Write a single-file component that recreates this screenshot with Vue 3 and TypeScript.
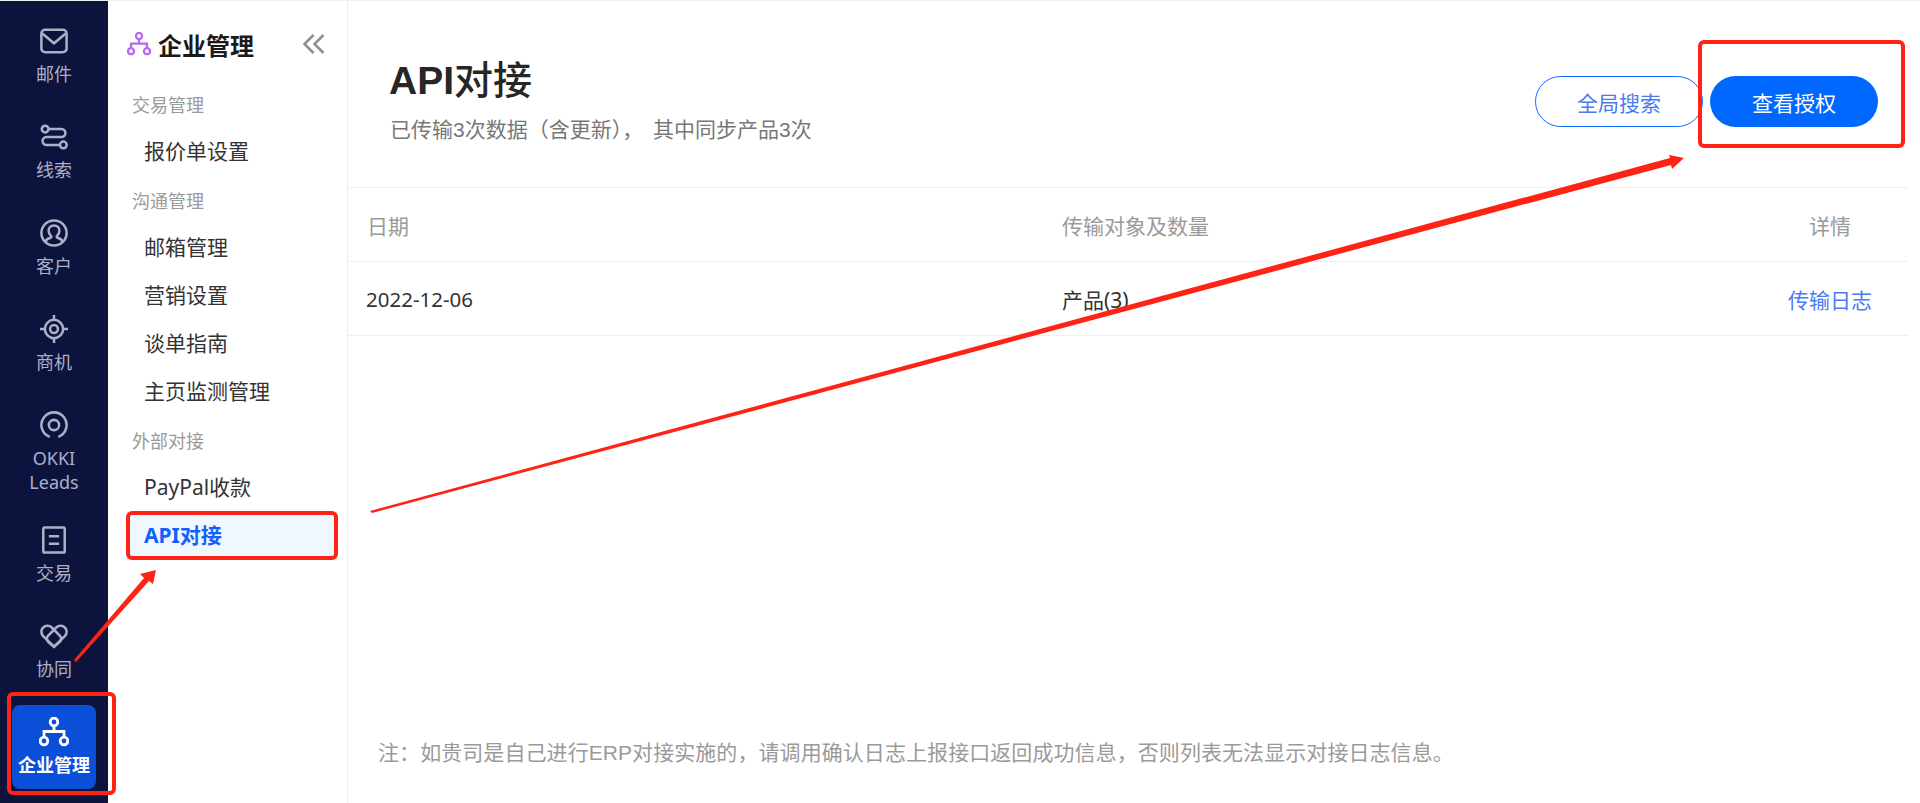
<script setup lang="ts">
type RailItem = { key: string; label: string[]; tall?: boolean }

const railItems: RailItem[] = [
  { key: 'mail', label: ['邮件'] },
  { key: 'lead', label: ['线索'] },
  { key: 'customer', label: ['客户'] },
  { key: 'chance', label: ['商机'] },
  { key: 'okki', label: ['OKKI', 'Leads'], tall: true },
  { key: 'trade', label: ['交易'] },
  { key: 'team', label: ['协同'] },
]

const menu = [
  { title: '交易管理', items: ['报价单设置'] },
  { title: '沟通管理', items: ['邮箱管理', '营销设置', '谈单指南', '主页监测管理'] },
  { title: '外部对接', items: ['PayPal收款', 'API对接'] },
]
</script>

<template>
  <div class="page">
    <nav class="rail">
      <a v-for="item in railItems" :key="item.key" class="rail-item" :class="{ tall: item.tall }">
        <svg class="rail-icon" viewBox="0 0 30 30" fill="none" stroke="currentColor" stroke-width="2.7">
          <template v-if="item.key === 'mail'">
            <rect x="1.5" y="3" width="27" height="24" rx="4" />
            <path d="M2.5 7 15 17.500 27.500 7" />
          </template>
          <template v-else-if="item.key === 'lead'">
            <circle cx="5.500" cy="6.500" r="3.600" />
            <circle cx="25" cy="23.500" r="3.600" />
            <path d="M9 6.500h14a4 4 0 0 1 0 8.500H7a4.200 4.200 0 0 0 0 8.500h14.500" />
          </template>
          <template v-else-if="item.key === 'customer'">
            <circle cx="15" cy="15" r="13.500" />
            <path d="M6.500 25v-1.500c0-2 2.500-2.600 5-3.500.8-.4.8-1.500 0-2.300-1.500-1.500-2.300-3-2.300-5 0-3.500 2.400-5.700 5.800-5.700s5.800 2.200 5.800 5.700c0 2-.8 3.500-2.300 5-.8.8-.8 1.900 0 2.300 2.500.9 5 1.500 5 3.500V25" />
          </template>
          <template v-else-if="item.key === 'chance'">
            <circle cx="15" cy="15" r="9.800" />
            <circle cx="15" cy="15" r="4.200" />
            <path d="M15 0v5M15 25v5M0 15h5M25 15h5" />
          </template>
          <template v-else-if="item.key === 'okki'">
            <path d="M10.500 27.700A13.500 13.500 0 1 1 19.500 27.700" />
            <circle cx="15" cy="15" r="5.500" />
          </template>
          <template v-else-if="item.key === 'trade'">
            <rect x="3.500" y="1.500" width="23" height="27" rx="1.500" />
            <path d="M9.500 11h11M9.500 19h11" />
          </template>
          <template v-else>
            <path d="M15 26.500 3.400 15.100A6.500 6.500 0 0 1 12.600 5.900L21.200 14.500a4.800 4.800 0 0 1 0 6.800L15 26.500Z" />
            <path d="M15 26.500 26.600 15.100A6.500 6.500 0 0 0 17.400 5.900L8.800 14.500a4.800 4.800 0 0 0 0 6.800L15 26.500Z" />
          </template>
        </svg>
        <span v-for="line in item.label" :key="line" class="rail-label">{{ line }}</span>
      </a>
      <a class="rail-item active">
        <svg class="rail-icon" viewBox="0 0 30 30" fill="none" stroke="currentColor" stroke-width="2.800">
          <circle cx="15" cy="5" r="3.800" />
          <circle cx="5" cy="24" r="3.800" />
          <circle cx="25" cy="24" r="3.800" />
          <path d="M15 9v5.500M5 20v-5.500h20V20" />
        </svg>
        <span class="rail-label">企业管理</span>
      </a>
    </nav>

    <aside class="side">
      <div class="side-hd">
        <svg class="side-logo" viewBox="0 0 30 30" fill="none" stroke="#b667f5" stroke-width="2.800">
          <circle cx="15" cy="5" r="3.800" />
          <circle cx="5" cy="24" r="3.800" />
          <circle cx="25" cy="24" r="3.800" />
          <path d="M15 9v5.500M5 20v-5.500h20V20" />
        </svg>
        <span class="side-title">企业管理</span>
        <svg class="side-fold" viewBox="0 0 22 20" fill="none" stroke="#8f8f8f" stroke-width="2.500">
          <path d="M10.500 1 1.500 10l9 9M20.500 1l-9 9 9 9" />
        </svg>
      </div>
      <div v-for="group in menu" :key="group.title" class="side-group">
        <div class="group-title">{{ group.title }}</div>
        <a
          v-for="entry in group.items"
          :key="entry"
          class="side-link"
          :class="{ current: entry === 'API对接' }"
        >{{ entry }}</a>
      </div>
    </aside>

    <main class="main">
      <header class="main-hd">
        <div>
          <h1 class="main-title"><b>API</b>对接</h1>
          <p class="main-sub">已传输3次数据（含更新）， 其中同步产品3次</p>
        </div>
        <div class="actions">
          <button class="btn ghost">全局搜索</button>
          <button class="btn primary">查看授权</button>
        </div>
      </header>
      <div class="row head">
        <span class="col-date head-date">日期</span>
        <span class="col-target">传输对象及数量</span>
        <span class="col-detail">详情</span>
      </div>
      <div class="row">
        <span class="col-date day">2022-12-06</span>
        <span class="col-target">产品(3)</span>
        <a class="col-detail link">传输日志</a>
      </div>
      <p class="note">注：如贵司是自己进行ERP对接实施的，请调用确认日志上报接口返回成功信息，否则列表无法显示对接日志信息。</p>
    </main>

    <!-- annotations drawn on top of the screenshot -->
    <svg class="marks" viewBox="0 0 1920 803">
      <g fill="none" stroke="#ff2316" stroke-width="4">
        <rect x="9" y="694" width="105" height="99" rx="4" />
        <rect x="128" y="513" width="208" height="45" rx="4" />
        <rect x="1700" y="42" width="203" height="104" rx="4" />
      </g>
      <g fill="#ff2316">
        <path d="M74 660 144 578 140 574 156 570 153 584 149 581 76 662Z" />
        <path d="M370 511 1670 158 1669 155 1684 158 1672 169 1671 165 372 513Z" />
      </g>
    </svg>
  </div>
</template>

<style>
html, body { margin: 0; background: #fff; }
</style>

<style scoped>
.page {
  position: relative;
  display: flex;
  height: 803px;
  width: 1920px;
  overflow: hidden;
  border-top: 1px solid #eee;
  box-sizing: border-box;
  font-family: "Noto Sans", "Noto Sans CJK SC", sans-serif;
  background: #fff;
}
.rail {
  width: 108px;
  flex-shrink: 0;
  background: #0c143e;
  color: #acb0c6;
  display: flex;
  flex-direction: column;
  align-items: center;
  padding-top: 26px;
  box-sizing: border-box;
}
.rail-item {
  width: 84px;
  height: 96px;
  flex-shrink: 0;
  display: flex;
  flex-direction: column;
  align-items: center;
}
.rail-item.tall { height: 115px; }
.rail-icon { width: 28px; height: 28px; flex-shrink: 0; }
.rail-label { font-size: 18px; line-height: 24px; margin-top: 7px; }
.rail-label + .rail-label { margin-top: 0; }
.rail-item.active {
  height: 84px;
  margin-top: -13px;
  padding-top: 12px;
  box-sizing: border-box;
  background: #0b4fd8;
  border-radius: 8px;
  color: #fff;
}
.rail-item.active .rail-icon { width: 30px; height: 30px; }
.rail-item.active .rail-label { font-weight: 700; margin-top: 7px; line-height: 22px; }
.side {
  width: 240px;
  flex-shrink: 0;
  border-right: 1px solid #eee;
  box-sizing: border-box;
  padding: 0 9px 0 19px;
}
.side-hd { display: flex; align-items: center; height: 79px; padding-top: 7px; box-sizing: border-box; }
.side-logo { width: 24px; height: 24px; margin-right: 7px; }
.side-title { font-size: 24px; font-weight: 700; color: #1a1a1a; flex: 1; }
.side-fold { width: 22px; height: 20px; margin-right: 13px; }
.group-title { font-size: 18px; line-height: 24px; color: #9a9a9a; padding: 13px 0 11px 5px; }
.side-link {
  display: block;
  height: 48px;
  line-height: 46px;
  font-size: 21px;
  color: #333;
  padding-left: 17px;
}
.side-link.current { background: #f0f7ff; color: #0f62fe; font-weight: 700; }
.main { flex: 1; min-width: 0; margin-right: 12px; display: flex; flex-direction: column; }
.main-hd {
  height: 186px;
  flex-shrink: 0;
  display: flex;
  justify-content: space-between;
  align-items: flex-start;
  padding: 52px 30px 0 41px;
  box-sizing: border-box;
}
.main-title {
  margin: 0;
  font-family: "Liberation Sans", "Noto Sans CJK SC", sans-serif;
  font-size: 39px;
  line-height: 56px;
  font-weight: 500;
  color: #262626;
}
.main-sub {
  margin: 7px 0 0 1px;
  font-family: "Liberation Sans", "Noto Sans CJK SC", sans-serif;
  font-size: 21px;
  word-spacing: 4px;
  line-height: 28px;
  color: #777;
}
.actions { display: flex; gap: 7px; margin-top: 23px; }
.btn {
  width: 168px;
  height: 51px;
  border-radius: 26px;
  font-family: inherit;
  font-size: 21px;
  box-sizing: border-box;
}
.btn.ghost { background: #fff; border: 1px solid #0f6bff; color: #4a7bf0; }
.btn.primary { background: #0068ff; border: none; color: #fff; }
.row {
  display: grid;
  grid-template-columns: 714px 1fr 200px;
  height: 74px;
  box-sizing: border-box;
  align-items: center;
  flex-shrink: 0;
  border-top: 1px solid #eee;
  font-size: 21px;
  color: #333;
}
.row.head { color: #9a9a9a; }
.row + .row { height: 75px; border-bottom: 1px solid #eee; }
.col-date { padding-left: 18px; }
.day { font-size: 20.5px; }
.head-date { padding-left: 19px; }
.col-detail { text-align: right; padding-right: 36px; }
.row.head .col-detail { padding-right: 57px; }
.link { color: #4a7bf0; }
.note {
  margin: auto 0 36px 30px;
  font-family: "Liberation Sans", "Noto Sans CJK SC", sans-serif;
  font-size: 21px;
  letter-spacing: .07px;
  line-height: 28px;
  color: #9a9a9a;
}
.marks { position: absolute; inset: -1px 0 0 0; width: 1920px; height: 803px; pointer-events: none; }
</style>
